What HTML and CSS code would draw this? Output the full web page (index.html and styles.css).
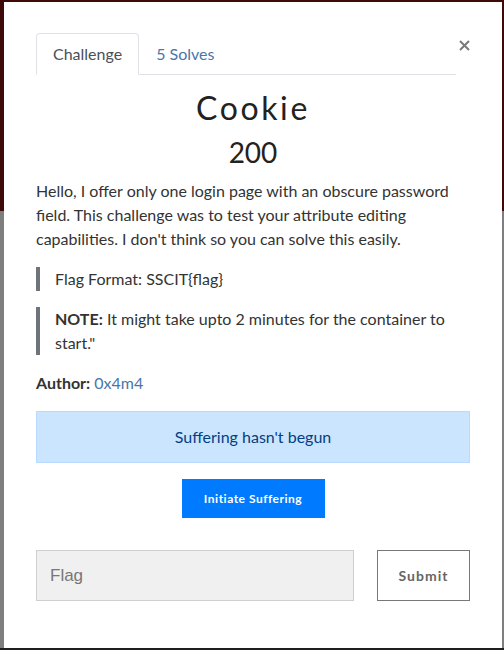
FILE: index.html
```html
<!DOCTYPE html>
<html>
<head>
<meta charset="utf-8">
<link rel="stylesheet" href="styles.css">
</head>
<body>
<div class="modal">
  <div class="header">
    <ul class="tabs">
      <li class="tab active">Challenge</li>
      <li class="tab link">5 Solves</li>
    </ul>
    <div class="close">
      <svg width="11" height="11" viewBox="0 0 11 11"><path d="M1 1L10 10M10 1L1 10" stroke="#7a7a7a" stroke-width="2" fill="none"/></svg>
    </div>
  </div>
  <h1 class="title">Cookie</h1>
  <h2 class="value">200</h2>
  <p class="desc">Hello, I offer only one login page with an obscure password field. This challenge was to test your attribute editing capabilities. I don't think so you can solve this easily.</p>
  <blockquote class="quote">Flag Format: SSCIT{flag}</blockquote>
  <blockquote class="quote"><strong>NOTE:</strong> It might take upto 2 minutes for the container to start."</blockquote>
  <p class="author"><strong>Author:</strong> <span class="link">0x4m4</span></p>
  <div class="alert">Suffering hasn't begun</div>
  <div class="btnrow"><button class="primary">Initiate Suffering</button></div>
  <div class="submitrow">
    <input class="flag" type="text" placeholder="Flag">
    <button class="submit">Submit</button>
  </div>
</div>
</body>
</html>
```
FILE: styles.css
```css
html, body {
  margin: 0;
  padding: 0;
}
body {
  width: 504px;
  height: 650px;
  overflow: hidden;
  background: linear-gradient(#3e0909 0, #3e0909 211px, #7e7e7e 211px, #7e7e7e 648px, #1e1e1e 648px);
  font-family: Lato, "Liberation Sans", sans-serif;
  color: #333;
  font-size: 16px;
  line-height: 24px;
}
.modal {
  box-sizing: border-box;
  margin: 2px 2px 0 4px;
  width: 498px;
  height: 646px;
  background: #fff;
  padding: 31px 32px 0 32px;
}
.header {
  display: flex;
}
.tabs {
  list-style: none;
  margin: 0;
  padding: 0;
  display: flex;
  flex: 1;
  border-bottom: 1px solid #dee2e6;
}
.tab {
  padding: 8px 16px;
  border: 1px solid transparent;
  border-top-left-radius: 4px;
  border-top-right-radius: 4px;
  margin-bottom: -1px;
}
.tab.active {
  color: #495057;
  border-color: #dee2e6 #dee2e6 #fff;
  background: #fff;
}
.link {
  color: #4a76a8;
}
.close {
  width: 14px;
  padding-top: 7px;
  display: flex;
  justify-content: flex-end;
}
.close svg {
  display: block;
}
.title {
  margin: 14px 0 0;
  text-align: center;
  font-weight: 400;
  font-size: 32px;
  line-height: 38px;
  letter-spacing: 2.6px;
  color: #222;
}
.value {
  margin: 8px 0 0;
  text-align: center;
  font-weight: 400;
  font-size: 28px;
  line-height: 34px;
  color: #222;
}
.desc {
  margin: 10px 0 16px;
}
.quote {
  margin: 0 0 16px;
  border-left: 4px solid #6f737a;
  padding-left: 15px;
}
.author {
  margin: 0 0 16px;
}
.alert {
  background: #cce5ff;
  border: 1px solid #b8daff;
  color: #004085;
  text-align: center;
  padding: 13px 20px;
}
.btnrow {
  display: flex;
  justify-content: center;
  margin-top: 16px;
}
.primary {
  background: #007bff;
  color: #fff;
  border: 0;
  width: 143px;
  height: 39px;
  font-family: Lato, sans-serif;
  font-weight: 700;
  font-size: 12px;
  letter-spacing: 0.5px;
  padding: 0;
}
.submitrow {
  display: flex;
  gap: 23px;
  margin-top: 32px;
}
.flag {
  box-sizing: border-box;
  width: 318px;
  height: 51px;
  background: #f0f0f0;
  border: 1px solid #cfcfcf;
  padding: 0 13px;
  font-family: "Liberation Sans", Arial, sans-serif;
  font-size: 17px;
  margin: 0;
}
.flag::placeholder {
  color: #777;
}
.submit {
  box-sizing: border-box;
  width: 93px;
  height: 51px;
  background: #fff;
  border: 1px solid #777;
  color: #666;
  font-family: Lato, sans-serif;
  font-weight: 700;
  font-size: 14px;
  letter-spacing: 1px;
  padding: 0;
}
```
